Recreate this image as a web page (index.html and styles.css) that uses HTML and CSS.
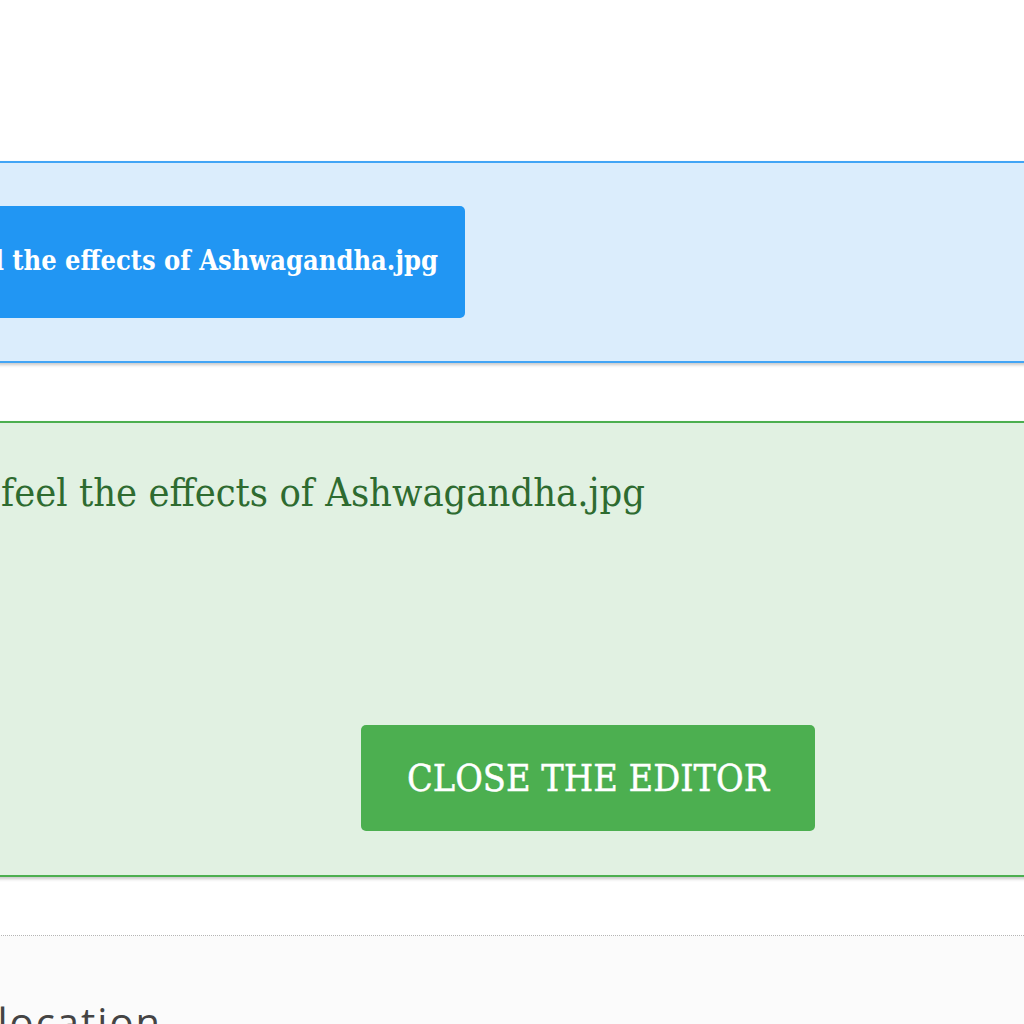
FILE: index.html
```html
<!DOCTYPE html>
<html lang="en">
<head>
    <meta charset="UTF-8">
    <meta name="viewport" content="width=device-width, initial-scale=1.0">
    <title>Media editor</title>
    <link rel="stylesheet" href="styles.css">
</head>
<body>
    <div class="page">
        <div class="spacer"></div>

        <div class="notice notice-info">
            <span class="file-chip">Still feel the effects of Ashwagandha.jpg</span>
        </div>

        <div class="notice notice-success">
            <p class="editor-file">Still feel the effects of Ashwagandha.jpg</p>
            <div class="editor-actions">
                <button class="btn btn-close">Close the editor</button>
            </div>
        </div>

        <div class="gap"></div>

        <div class="field">
            <span class="field-label">Geolocation</span>
        </div>
    </div>
</body>
</html>
```

FILE: styles.css
```css
html, body {
    margin: 0;
    padding: 0;
    background: #ffffff;
    overflow: hidden;
}

.page {
    margin-left: -200px;
    width: 1424px;
    font-family: "DejaVu Serif Condensed", "Liberation Serif", serif;
}

.spacer {
    height: 161px;
}

.notice {
    border-top: 2px solid;
    border-bottom: 2px solid;
    box-shadow: 0 2px 3px rgba(0, 0, 0, 0.22);
}

.notice-info {
    background: #dbedfc;
    border-color: #42a5f5;
    padding: 43px 0 43px 0;
    height: 112px;
    display: flex;
    align-items: stretch;
}

.file-chip {
    display: flex;
    align-items: center;
    margin-left: -40px;
    padding: 0 27px 4px 0;
    width: 678px;
    justify-content: flex-end;
    background: #2196f3;
    color: #ffffff;
    font-weight: bold;
    font-size: 27px;
    border-radius: 0 5px 5px 0;
}

.notice-success {
    margin-top: 58px;
    background: #e1f1e2;
    border-color: #4caf50;
    height: 452px;
}

.editor-file {
    margin: 44px 0 0 0;
    width: 845px;
    text-align: right;
    font-size: 39.5px;
    line-height: 50px;
    color: #2e6b30;
}

.editor-actions {
    display: flex;
    margin-top: 208px;
    padding-left: 561px;
}

.btn {
    border: none;
    border-radius: 5px;
    font-family: inherit;
    cursor: pointer;
}

.btn-close {
    width: 454px;
    height: 106px;
    background: #4caf50;
    color: #ffffff;
    font-size: 37.5px;
    text-transform: uppercase;
    -webkit-text-stroke: 0.4px #ffffff;
}

.gap {
    height: 58px;
    border-bottom: 1px dotted #b5b5b5;
}

.field {
    background: #fbfbfb;
    height: 200px;
    padding-top: 58px;
}

.field-label {
    display: block;
    width: 362px;
    text-align: right;
    font-family: "Open Sans", sans-serif;
    font-size: 40px;
    letter-spacing: 2px;
    color: #444444;
}
```
